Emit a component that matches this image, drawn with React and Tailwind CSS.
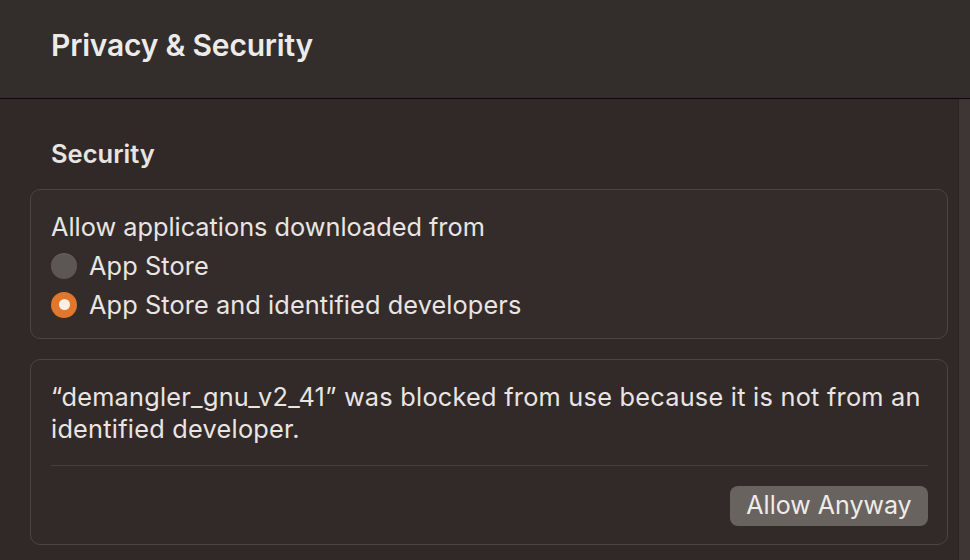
export default function App() {
  const font = { fontFamily: 'Inter, "Noto Sans", sans-serif' };
  return (
    <div className="w-[970px] h-[560px] overflow-hidden flex flex-col bg-[#302927] text-[#e9e5e3]" style={font}>
      <div className="h-[99px] shrink-0 bg-[#332d2b] border-b border-[#0c0a0a] flex items-center pl-[51px] pb-[8px]">
        <h1 className="text-[30px] font-semibold tracking-[-0.2px] text-[#ecebea]">Privacy &amp; Security</h1>
      </div>
      <div className="flex flex-1 min-h-0">
        <div className="flex-1 pl-[30px] pr-[10px] pt-[38px]">
          <h2 className="pl-[21px] text-[25.5px] font-semibold leading-[34px] text-[#e8e4e2]">Security</h2>
          <div className="mt-[18px] h-[150px] rounded-[10px] border border-[#4c4442] bg-[#342c2a] pl-[20px] pt-[20px]">
            <div className="text-[25.3px] leading-[34px]">Allow applications downloaded from</div>
            <div className="mt-[2px] flex items-center gap-[12px] h-[39px]">
              <span className="w-[26px] h-[26px] rounded-full bg-[#5c5755] shadow-[inset_0_1px_0_rgba(255,255,255,0.08)]" />
              <span className="text-[25.3px] tracking-[0.1px]">App Store</span>
            </div>
            <div className="flex items-center gap-[12px] h-[39px]">
              <span className="w-[26px] h-[26px] rounded-full bg-[#e0772c] flex items-center justify-center">
                <span className="w-[11px] h-[11px] rounded-full bg-[#fbeee2]" />
              </span>
              <span className="text-[25.3px] tracking-[0.1px]">App Store and identified developers</span>
            </div>
          </div>
          <div className="mt-[20px] h-[186px] rounded-[10px] border border-[#4c4442] bg-[#322a28] pl-[20px] pr-[19px] pt-[21px]">
            <div className="text-[25.3px] leading-[32px] tracking-[0.25px]">“demangler_gnu_v2_41” was blocked from use because it is not from an identified developer.</div>
            <div className="mt-[20px] h-px bg-[#463f3d]" />
            <div className="flex justify-end pt-[20px]">
              <button className="h-[40px] w-[198px] rounded-[8px] bg-[#696360] text-[25px] text-[#efecea] flex items-center justify-center">Allow Anyway</button>
            </div>
          </div>
        </div>
        <div className="w-[12px] shrink-0 bg-[#3d3634] border-l border-[#2a2321]" />
      </div>
    </div>
  );
}
